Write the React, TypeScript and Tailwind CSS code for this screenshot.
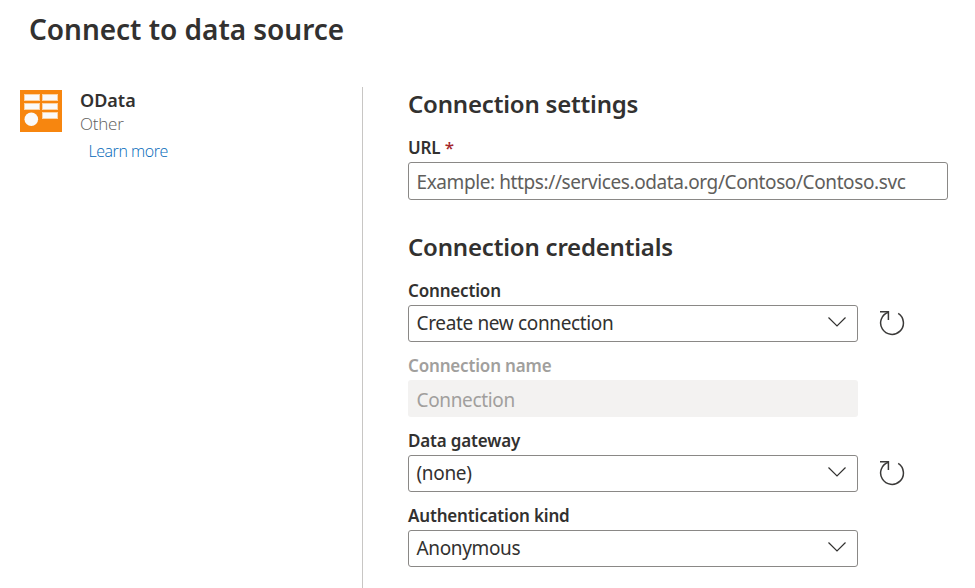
import React from "react";

function ODataIcon() {
  return (
    <svg width="42" height="42" viewBox="0 0 42 42" className="shrink-0">
      <rect width="42" height="42" fill="#f7860f" />
      <g fill="#fafafa" stroke="#fcd3a4" strokeWidth="1">
        <rect x="4.5" y="4.5" width="15" height="6" />
        <rect x="22.5" y="4.5" width="15" height="6" />
        <rect x="4.5" y="13.5" width="15" height="6" />
        <rect x="22.5" y="13.5" width="15" height="6" />
        <rect x="22.5" y="22.5" width="15" height="6" />
      </g>
      <circle cx="11.3" cy="29.3" r="6.8" fill="#fafafa" />
    </svg>
  );
}

function Chevron() {
  return (
    <svg width="18" height="10" viewBox="0 0 18 10" fill="none" stroke="#323130" strokeWidth="1.2" className="mb-1 shrink-0">
      <path d="M0.5 0.5 L9 9 L17.5 0.5" />
    </svg>
  );
}

function RefreshIcon() {
  return (
    <svg width="27" height="27" viewBox="0 0 27 27" fill="none" stroke="#3b3a39" strokeWidth="1.5" className="shrink-0">
      <path d="M9.3 2.2 A11.4 11.4 0 1 0 19.2 3.4" />
      <path d="M1 1.7 H9.4 V10" />
    </svg>
  );
}

const labelClass = "mb-0.5 h-6 text-[17px] leading-6 font-semibold tracking-[-0.17px]";

function Select({ label, value, refresh }: { label: string; value: string; refresh?: boolean }) {
  return (
    <div className="mb-3">
      <div className={labelClass}>{label}</div>
      <div className="flex h-[37px] items-center gap-[21px]">
        <div className="flex h-[37px] w-[450px] items-center justify-between rounded-[3px] border border-[#8a8886] pr-[11px] pl-[7.5px]">
          <span className="text-[19px] leading-[35px] tracking-[-0.35px]">{value}</span>
          <Chevron />
        </div>
        {refresh && <RefreshIcon />}
      </div>
    </div>
  );
}

export default function App() {
  return (
    <div className="flex h-[588px] w-[975px] flex-col overflow-hidden bg-white font-['Noto_Sans','Open_Sans',sans-serif] text-[#323130]">
      <h1 className="mt-[9px] ml-[29px] h-10 text-[28px] leading-[41px] font-semibold tracking-[-0.03px] whitespace-nowrap">Connect to data source</h1>
      <div className="mt-[38px] flex flex-1">
        <aside className="flex w-[363px] gap-[18px] border-r border-[#c8c6c4] pt-[3px] pl-5">
          <ODataIcon />
          <div className="-mt-[2px] whitespace-nowrap">
            <div className="h-6 text-[18px] leading-6 font-semibold">OData</div>
            <div className="h-6 font-['Open_Sans','Noto_Sans',sans-serif] text-[17px] leading-6 font-light tracking-[-0.2px] text-[#605e5c]">Other</div>
            <a className="mt-[3px] ml-[8.5px] block h-6 font-['Open_Sans','Noto_Sans',sans-serif] text-[16px] leading-6 font-light tracking-[-0.45px] text-[#0067b8]">Learn more</a>
          </div>
        </aside>
        <main className="ml-[45px] w-[540px] whitespace-nowrap">
          <h2 className="h-8 text-[24px] leading-[34px] font-semibold tracking-[-0.2px]">Connection settings</h2>
          <div className="mt-[17px] mb-0.5 h-6 text-[17px] leading-6 font-semibold tracking-[-0.15px]">
            URL <span className="font-medium text-[#a4262c]">*</span>
          </div>
          <div className="h-[38px] rounded-[3px] border border-[#8a8886] pl-[7.5px] text-[19px] leading-[38px] tracking-[-0.4px] text-[#605e5c]">
            Example: https://services.odata.org/Contoso/Contoso.svc
          </div>
          <h2 className="mt-[30px] mb-[17px] h-8 text-[24px] leading-[34px] font-semibold tracking-[-0.2px]">Connection credentials</h2>
          <Select label="Connection" value="Create new connection" refresh />
          <div className="mb-3 text-[#a19f9d]">
            <div className={labelClass}>Connection name</div>
            <div className="h-[37px] w-[450px] rounded-[3px] bg-[#f3f2f1] pl-[8.5px] text-[19px] leading-[40px] tracking-[-0.35px]">Connection</div>
          </div>
          <Select label="Data gateway" value="(none)" refresh />
          <Select label="Authentication kind" value="Anonymous" />
        </main>
      </div>
    </div>
  );
}
